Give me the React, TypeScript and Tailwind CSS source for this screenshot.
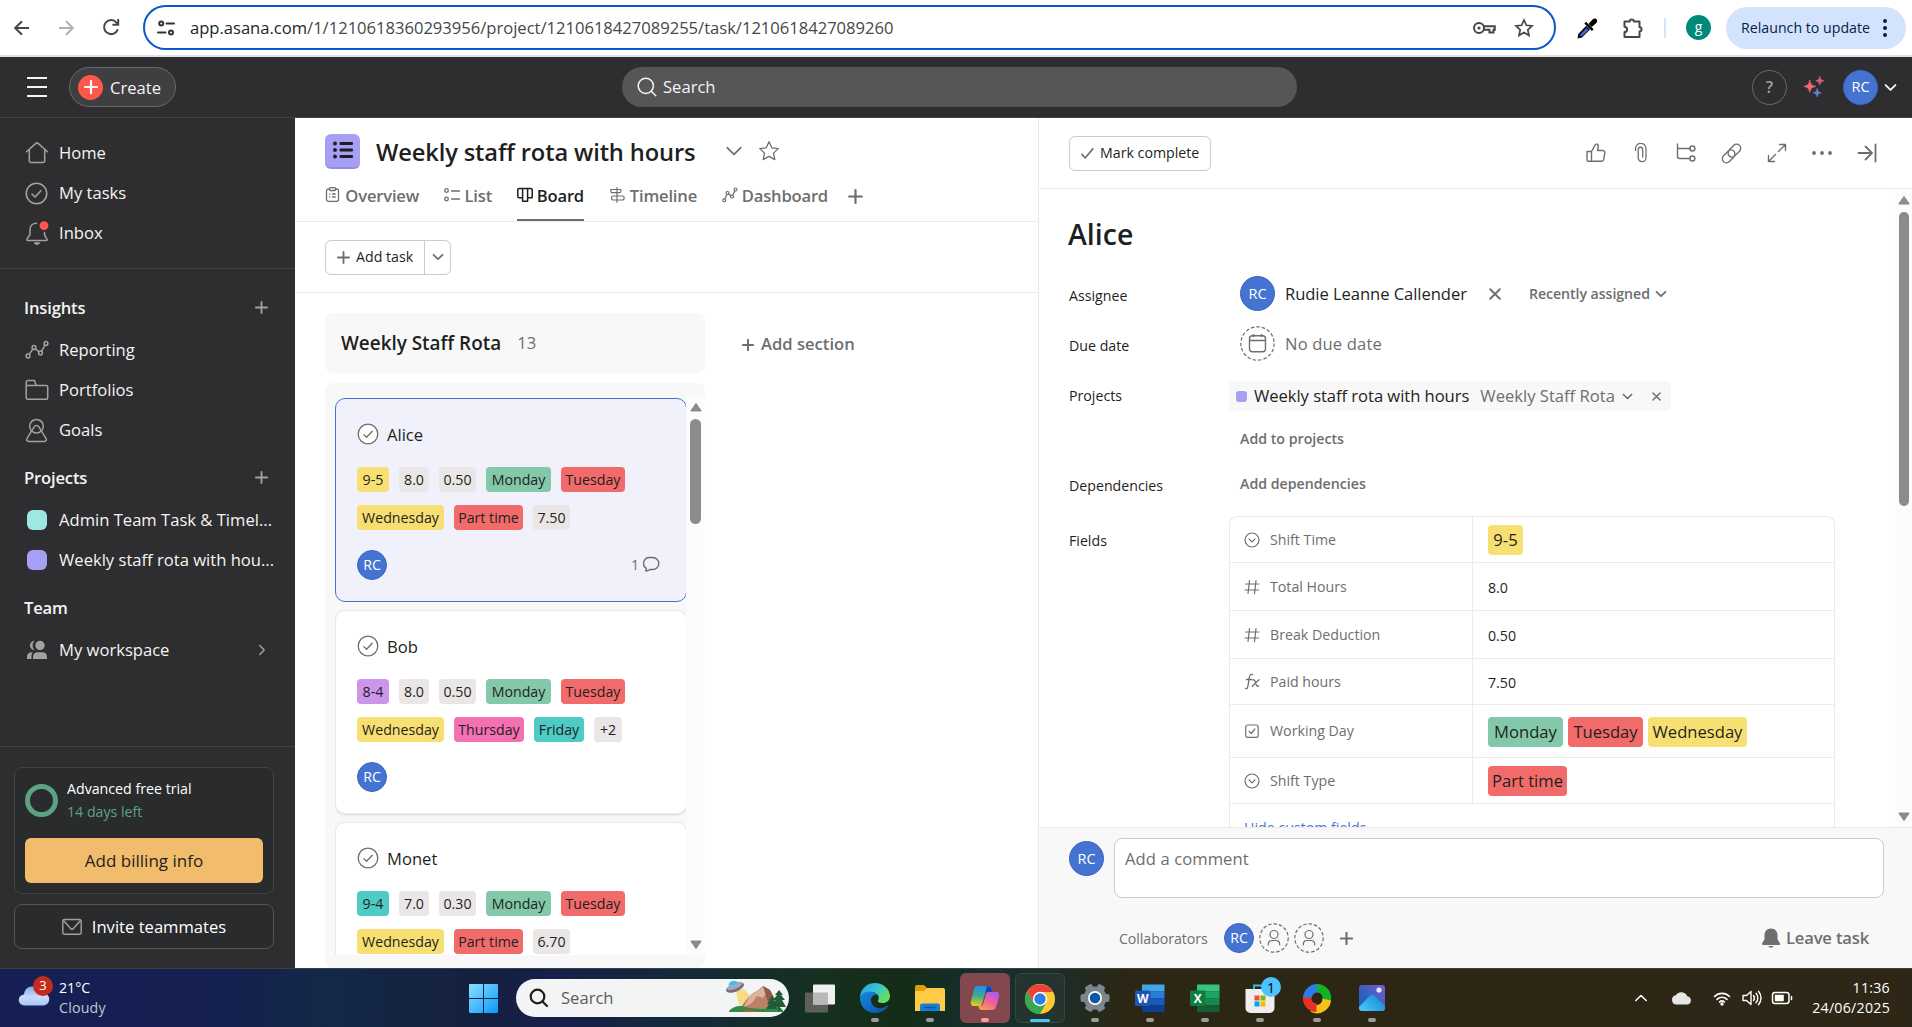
import type { ReactNode } from "react";

type IconProps = { className?: string; children: ReactNode; size?: number; sw?: number; box?: number };

function Icon({ className = "", children, size = 20, sw = 1.4, box = 20 }: IconProps) {
  return (
    <svg
      width={size}
      height={size}
      viewBox={`0 0 ${box} ${box}`}
      fill="none"
      stroke="currentColor"
      strokeWidth={sw}
      strokeLinecap="round"
      strokeLinejoin="round"
      className={`shrink-0 ${className}`}
    >
      {children}
    </svg>
  );
}

const Chevron = ({ size = 12, sw = 1.8, className = "" }: { size?: number; sw?: number; className?: string }) => (
  <Icon size={size} box={12} sw={sw} className={className}>
    <path d="M1.500 3.800 6 8.200l4.500-4.400" />
  </Icon>
);

const Plus = ({ size = 13, sw = 2, className = "" }: { size?: number; sw?: number; className?: string }) => (
  <Icon size={size} box={14} sw={sw} className={className}>
    <path d="M7 1v12M1 7h12" />
  </Icon>
);

const Cross = ({ size = 10, className = "" }: { size?: number; className?: string }) => (
  <Icon size={size} box={10} sw={1.6} className={className}>
    <path d="M1 1l8 8M9 1 1 9" />
  </Icon>
);

const CircleCheck = ({ size = 22, sw = 1.4, className = "" }: { size?: number; sw?: number; className?: string }) => (
  <Icon size={size} box={22} sw={sw} className={className}>
    <circle cx="11" cy="11" r="9.800" />
    <path d="m6.800 11.600 2.800 2.700 5.600-6" />
  </Icon>
);

const GraphIcon = ({ size = 24, sw = 1.5 }: { size?: number; sw?: number }) => (
  <Icon size={size} box={24} sw={sw}>
    <circle cx="3" cy="18" r="1.900" />
    <circle cx="9" cy="9.500" r="1.900" />
    <circle cx="15.500" cy="15" r="1.900" />
    <circle cx="21" cy="5.500" r="1.900" />
    <path d="M4.200 16.400 7.900 11M10.500 10.800l3.600 3M16.500 13.300l3.500-6.200" />
  </Icon>
);

function Avatar({ className = "" }: { className?: string }) {
  return (
    <span
      className={`flex shrink-0 items-center justify-center rounded-full border border-[#3c66bd] bg-[#4573d2] text-white ${className}`}
    >
      RC
    </span>
  );
}

/* ---------- Browser toolbar ---------- */

function BrowserBar() {
  return (
    <div className="flex h-[57px] shrink-0 items-center border-b-2 border-[#dfe1e0] bg-white text-[#474747]">
      <div className="flex w-[143px] shrink-0 items-center">
        <Icon size={18} box={18} sw={2} className="ml-[13px]">
          <path d="M16 9H2.500M9 2.200 2.200 9 9 15.800" strokeLinecap="butt" strokeLinejoin="miter" />
        </Icon>
        <Icon size={18} box={18} sw={2} className="ml-[26px] text-[#b0b0b0]">
          <path d="M2 9h13.500M9 2.200 15.800 9 9 15.800" strokeLinecap="butt" strokeLinejoin="miter" />
        </Icon>
        <Icon size={20} box={20} sw={2} className="-mt-px ml-[26px]">
          <path d="M16.800 12.200A7 7 0 1 1 15.500 5.600L17 7.200" strokeLinecap="butt" />
          <path d="M17.200 2v5.800h-5.800" strokeLinecap="butt" strokeLinejoin="miter" />
        </Icon>
      </div>
      <div className="flex h-[45px] w-[1413px] shrink-0 items-center rounded-full border-2 border-[#0b57d0]">
        <Icon size={18} box={18} sw={2} className="ml-[12px] text-[#333]">
          <circle cx="4.200" cy="4.500" r="2" />
          <path d="M9.500 4.500H17M1 13.500h7.500" />
          <circle cx="14" cy="13.500" r="2" />
        </Icon>
        <span className="ml-[15px] text-[16.6px] leading-6 tracking-[-0.001em] text-[#474747]">
          <span className="text-[#1f1f1f]">app.asana.com</span>/1/1210618360293956/project/1210618427089255/task/1210618427089260
        </span>
        <Icon size={24} box={24} sw={2} className="ml-auto">
          <circle cx="7" cy="12" r="5" />
          <circle cx="7" cy="12" r="1.600" fill="currentColor" stroke="none" />
          <path d="M12 10.200h10.800v3.600h-1.300v2.700h-4v-2.700H12" strokeLinejoin="miter" />
        </Icon>
        <Icon size={20} box={20} sw={1.7} className="mr-[20px] ml-[18px]">
          <path
            d="m10 2 2.400 5.300 5.700.600-4.300 3.900 1.200 5.700L10 14.600l-5 2.900 1.200-5.700L1.900 7.900l5.700-.6z"
            strokeLinejoin="miter"
          />
        </Icon>
      </div>
      <Icon size={22} box={22} sw={0} className="ml-[20px]">
        <path d="M1.500 21.500 2.200 17l8-8.200 3.800 3.800-8 8z" fill="#111" />
        <path d="m4.200 18.700.3-1.500 6-6 1.800 1.800-6 5.800z" fill="#4a67f0" />
        <path d="m10 4.700 7.600 7.600-1.700 1.700-7.600-7.600z" fill="#000" />
        <path d="M12.500 7 16.500 2.500c1.500-1.600 3.800-1.100 4.400.3.500 1.100.2 2.300-.6 3.100L15.800 10z" fill="#000" />
      </Icon>
      <Icon size={22} box={22} sw={2} className="ml-[24px]">
        <path
          d="M2.500 4.500h5.200a2.100 2.100 0 0 1 4.200 0h5.600v5.700a2.100 2.100 0 0 1 0 4.200v5.600h-15v-5a2.600 2.600 0 0 0 0-5.200z"
          strokeLinejoin="round"
        />
      </Icon>
      <span className="ml-[20px] h-5 w-[2px] bg-[#d3e3fd]" />
      <span className="ml-[20px] flex size-[25px] items-center justify-center rounded-full bg-[#00897b] pb-[2px] text-sm text-white">
        g
      </span>
      <span className="ml-[15px] flex h-[42px] w-[180px] items-center rounded-full bg-[#d3e3fd] pl-[15px] text-[14.2px] text-[#041e49]">
        Relaunch to update
        <span className="ml-[13px] flex flex-col gap-[3px]">
          <span className="size-1 rounded-full bg-[#041e49]" />
          <span className="size-1 rounded-full bg-[#041e49]" />
          <span className="size-1 rounded-full bg-[#041e49]" />
        </span>
      </span>
    </div>
  );
}

/* ---------- Asana top bar ---------- */

function TopBar() {
  return (
    <header className="flex h-[61px] shrink-0 items-center border-b border-[#424244] bg-[#2e2e30] text-[16.6px] text-[#f5f4f3]">
      <div className="ml-[27px] flex w-5 flex-col gap-[7px]">
        <span className="h-[2px] bg-[#f5f4f3]" />
        <span className="h-[2px] bg-[#f5f4f3]" />
        <span className="h-[2px] bg-[#f5f4f3]" />
      </div>
      <button className="ml-[22px] flex h-10 w-[107px] items-center rounded-full border border-[#6a696a] bg-[#3f3f41] pl-2">
        <span className="flex size-[25px] items-center justify-center rounded-full bg-[#ff584a] text-white">
          <Plus size={14} sw={2.2} />
        </span>
        <span className="ml-[7px] pt-[2px]">Create</span>
      </button>
      <div className="ml-[446px] flex h-10 w-[675px] items-center rounded-full bg-[#565557] pl-[15px]">
        <Icon size={20} box={20} sw={1.5}>
          <circle cx="8.800" cy="8.800" r="7.600" />
          <path d="m14.500 14.500 4.300 4.300" />
        </Icon>
        <span className="ml-[6px] pt-px">Search</span>
      </div>
      <span className="ml-[455px] flex size-[35px] items-center justify-center rounded-full border border-[#6a696a] text-[16px] font-semibold text-[#a2a0a2]">
        ?
      </span>
      <Icon size={22} box={22} sw={0} className="ml-[16px]">
        <path d="M6.800 4.500c1 4.100 1.800 4.900 5.900 5.900-4.100 1-4.900 1.800-5.900 5.900-1-4.100-1.800-4.900-5.900-5.900 4.100-1 4.900-1.800 5.900-5.900Z" fill="#f06a6a" stroke="#f06a6a" strokeWidth="0.800" />
        <path d="M16.800.800c.7 2.700 1.300 3.300 4 4-2.700.7-3.300 1.300-4 4-.7-2.700-1.300-3.300-4-4 2.700-.7 3.300-1.300 4-4Z" fill="#d9627c" stroke="#d9627c" strokeWidth="0.800" />
        <path d="M14.200 12.800c.7 2.700 1.300 3.300 4 4-2.700.7-3.300 1.300-4 4-.7-2.700-1.300-3.300-4-4 2.700-.7 3.300-1.300 4-4Z" fill="#6c7bd9" stroke="#6c7bd9" strokeWidth="0.800" />
      </Icon>
      <Avatar className="ml-[18px] size-[35px] text-[14.5px]" />
      <Chevron size={13} className="ml-[6px]" />
    </header>
  );
}

/* ---------- Sidebar ---------- */

function NavRow({ icon, label, trailing }: { icon: ReactNode; label: string; trailing?: ReactNode }) {
  return (
    <div className="flex h-10 items-center pr-[27px] pl-6 text-[16.6px] whitespace-nowrap text-[#f5f4f3]">
      <span className="flex w-[25px] shrink-0 justify-center text-[#a2a0a2]">{icon}</span>
      <span className="ml-[10px] pt-px">{label}</span>
      {trailing && <span className="ml-auto text-[#a2a0a2]">{trailing}</span>}
    </div>
  );
}

function NavHeading({ label, plus }: { label: string; plus?: boolean }) {
  return (
    <div className="flex h-[45px] items-center justify-between pr-[27px] pl-6 text-[16.6px] font-semibold tracking-[-0.01em] text-[#f5f4f3]">
      <span className="pt-px">{label}</span>
      {plus && <Plus size={13} className="text-[#a2a0a2]" />}
    </div>
  );
}

function Sidebar() {
  return (
    <aside className="flex w-[295px] shrink-0 flex-col bg-[#2e2e30]">
      <div className="h-[151px] border-b border-[#424244] pt-[15px]">
        <NavRow
          label="Home"
          icon={
            <Icon size={24} box={24} sw={1.5}>
              <path d="M1.500 10.800 10.600 2.600a2 2 0 0 1 2.800 0l9.100 8.200M4.300 9v10.500a2 2 0 0 0 2 2h11.400a2 2 0 0 0 2-2V9" />
            </Icon>
          }
        />
        <NavRow label="My tasks" icon={<CircleCheck size={23} sw={1.5} />} />
        <NavRow
          label="Inbox"
          icon={
            <Icon size={24} box={24} sw={1.5}>
              <path d="M11.500 2.200C7.600 2.200 5 5 5 8.800v4.700L2 18.200c-.3.700 0 1.300.700 1.300h18.600c.7 0 1-.6.7-1.300l-2.500-4.200v-2.600" />
              <path d="M9.800 22h4.400l-2.200 1.300z" fill="currentColor" />
              <circle cx="19" cy="4.700" r="4.400" fill="#ff584a" stroke="none" />
            </Icon>
          }
        />
      </div>
      <div className="pt-[16px]">
        <NavHeading label="Insights" plus />
        <NavRow label="Reporting" icon={<GraphIcon />} />
        <NavRow
          label="Portfolios"
          icon={
            <Icon size={24} box={24} sw={1.5}>
              <path d="M1.200 7.500V4a1.500 1.500 0 0 1 1.500-1.500h6.800L11 7.500M1.200 7.500h20a1.500 1.500 0 0 1 1.500 1.500v10.700a1.500 1.500 0 0 1-1.500 1.500H2.700a1.500 1.500 0 0 1-1.500-1.500z" />
            </Icon>
          }
        />
        <NavRow
          label="Goals"
          icon={
            <Icon size={25} box={25} sw={1.5}>
              <circle cx="12.500" cy="8.200" r="6.800" />
              <path d="M10.300 8.700c1-1.600 3.400-1.600 4.400 0l7.300 11.600c1 1.500 0 3.200-1.800 3.200H4.800C3 23.500 2 21.800 3 20.300z" />
            </Icon>
          }
        />
      </div>
      <div className="pt-[5px]">
        <NavHeading label="Projects" plus />
        <NavRow label="Admin Team Task & Timel..." icon={<span className="size-5 rounded-md bg-[#9ee7e3]" />} />
        <NavRow label="Weekly staff rota with hou..." icon={<span className="size-5 rounded-md bg-[#a69ff3]" />} />
      </div>
      <div className="pt-[5px]">
        <NavHeading label="Team" />
        <NavRow
          label="My workspace"
          icon={
            <Icon size={22} box={22} sw={0}>
              <g fill="currentColor">
                <circle cx="14" cy="6.500" r="4.700" />
                <path d="M7 20v-2.500c0-2.700 2-4.300 4.300-4.300h5.400c2.400 0 4.300 1.700 4.300 4.300V20z" />
                <path d="M8.600 1.800A6.500 6.500 0 0 0 8.600 11.200 4.700 4.700 0 0 1 8.600 1.800Z" />
                <path d="M1 20v-2.500c0-2.400 1.800-4.300 5-4.300h.9c-1 1-1.400 2.300-1.400 4V20z" />
              </g>
            </Icon>
          }
          trailing={<Chevron size={12} sw={1.5} className="-rotate-90" />}
        />
      </div>
      <div className="mt-auto border-t border-[#424244] px-[14px] pt-[20px] pb-[19px]">
        <div className="h-[127px] w-[260px] rounded-lg border border-[#424244] bg-[#2a2b2d] px-[10px] pt-[9px]">
          <div className="flex h-[46px] items-center">
            <span className="size-[33px] rounded-full border-[5px] border-[#5da283]" />
            <div className="ml-[9px] text-[14.2px] leading-[23px] text-white">
              <div>Advanced free trial</div>
              <div className="text-[#5da283]">14 days left</div>
            </div>
          </div>
          <button className="mt-[15px] h-[45px] w-[238px] rounded-md bg-[#f1bd6c] pt-px text-[17px] text-[#1e1f21]">Add billing info</button>
        </div>
        <button className="mt-[10px] flex h-[45px] w-[260px] items-center justify-center rounded-lg border border-[#565557] bg-[#2a2b2d] text-[16.6px] text-white">
          <Icon size={20} box={20} sw={1.4} className="mr-[10px] text-[#a2a0a2]">
            <rect x="0.800" y="2.500" width="18.400" height="14.800" rx="2" />
            <path d="m1.500 3.500 7.300 8.200c.7.700 1.700.700 2.400 0l7.300-8.200" />
          </Icon>
          <span className="pt-[2px]">Invite teammates</span>
        </button>
      </div>
    </aside>
  );
}

/* ---------- Board ---------- */

const CHIP = {
  yellow: "bg-[#f8df72]",
  gray: "bg-[#e9e6e5]",
  green: "bg-[#83c9a9]",
  red: "bg-[#f16b6b]",
  pink: "bg-[#f56fb3]",
  teal: "bg-[#4ecbc4]",
  purple: "bg-[#cd95ea]",
};
type Chip = [label: string, color: keyof typeof CHIP, width: string];

const MON: Chip = ["Monday", "green", "w-[65px]"];
const TUE: Chip = ["Tuesday", "red", "w-[64px]"];
const WED: Chip = ["Wednesday", "yellow", "w-[87px]"];
const PART: Chip = ["Part time", "red", "w-[69px]"];

type CardData = { name: string; rows: Chip[][]; comments?: number; selected?: boolean };

const CARDS: CardData[] = [
  {
    name: "Alice",
    selected: true,
    comments: 1,
    rows: [
      [["9-5", "yellow", "w-8"], ["8.0", "gray", "w-[30px]"], ["0.50", "gray", "w-[37px]"], MON, TUE],
      [WED, PART, ["7.50", "gray", "w-[37px]"]],
    ],
  },
  {
    name: "Bob",
    rows: [
      [["8-4", "purple", "w-8"], ["8.0", "gray", "w-[30px]"], ["0.50", "gray", "w-[37px]"], MON, TUE],
      [WED, ["Thursday", "pink", "w-[70px]"], ["Friday", "teal", "w-[50px]"], ["+2", "gray", "w-[28px]"]],
    ],
  },
  {
    name: "Monet",
    rows: [
      [["9-4", "teal", "w-8"], ["7.0", "gray", "w-[30px]"], ["0.30", "gray", "w-[37px]"], MON, TUE],
      [WED, PART, ["6.70", "gray", "w-[37px]"]],
    ],
  },
];

function TaskCard({ card }: { card: CardData }) {
  return (
    <div
      className={`h-[204px] w-[352px] shrink-0 rounded-[10px] border pt-[22px] pl-[21px] ${
        card.selected ? "border-[#4573d2] bg-[#f1f1fc]" : "border-[#edeae9] bg-white shadow-sm"
      }`}
    >
      <div className="flex h-[26px] items-center text-[16.6px] text-[#1e1f21]">
        <CircleCheck size={22} sw={1.3} className="text-[#6d6e6f] [&_circle]:fill-white" />
        <span className="ml-[8px] pt-[3px]">{card.name}</span>
      </div>
      {card.rows.map((row, i) => (
        <div key={i} className={`flex gap-[10px] ${i === 0 ? "mt-5" : "mt-[13px]"}`}>
          {row.map(([label, color, width]) => (
            <span
              key={label}
              className={`flex h-[25px] items-center justify-center rounded text-[14.2px] whitespace-nowrap text-[#1e1f21] ${CHIP[color]} ${width}`}
            >
              {label}
            </span>
          ))}
        </div>
      ))}
      <div className="mt-5 flex items-center pr-[26px]">
        <Avatar className="size-[30px] text-[14.2px]" />
        {card.comments && (
          <span className="ml-auto flex items-center gap-1 text-[14.2px] text-[#6d6e6f]">
            {card.comments}
            <Icon size={17} box={17} sw={1.4}>
              <path d="M7.300 1.500h2.500a6 6 0 0 1 0 12H7c-1 .900-2.600 1.500-4.300 1.500.5-.8.700-1.700.5-2.600A6 6 0 0 1 7.300 1.500Z" />
            </Icon>
          </span>
        )}
      </div>
    </div>
  );
}

function Tab({ icon, label, active, width }: { icon: ReactNode; label: string; active?: boolean; width: string }) {
  return (
    <span
      className={`flex h-full justify-between border-b-2 text-[16.6px] leading-5 font-semibold tracking-[-0.012em] whitespace-nowrap ${
        active ? "border-[#6d6e6f] text-[#1e1f21]" : "border-transparent text-[#6d6e6f]"
      } ${width}`}
    >
      {icon}
      <span className="pt-[2px]">{label}</span>
    </span>
  );
}

function ScrollArrow({ down }: { down?: boolean }) {
  return (
    <svg width="12" height="10" viewBox="0 0 12 10" className={down ? "rotate-180" : ""}>
      <path d="M6 0.800 11.300 8.300Q11.600 9.500 10.500 9.500H1.500Q.4 9.500.7 8.300Z" fill="#8b8b8b" />
    </svg>
  );
}

function Board() {
  return (
    <main className="flex w-[743px] shrink-0 flex-col bg-white">
      <div className="flex h-[66px] items-center pl-[30px]">
        <span className="flex size-[35px] items-center justify-center rounded-md border-b-2 border-[#958ee0] bg-[#a69ff3] text-[#1e1f21]">
          <Icon size={20} box={20} sw={0}>
            <g fill="currentColor">
              <circle cx="2" cy="3.500" r="2" />
              <circle cx="2" cy="10" r="2" />
              <circle cx="2" cy="16.500" r="2" />
              <rect x="6.500" y="2" width="13.500" height="3" rx="1" />
              <rect x="6.500" y="8.500" width="13.500" height="3" rx="1" />
              <rect x="6.500" y="15" width="13.500" height="3" rx="1" />
            </g>
          </Icon>
        </span>
        <h1 className="ml-4 pt-[3px] text-[23.7px] font-semibold tracking-[-0.006em] whitespace-nowrap text-[#1e1f21]">
          Weekly staff rota with hours
        </h1>
        <Chevron size={18} sw={1.1} className="ml-[30px] text-[#6d6e6f]" />
        <Icon size={22} box={22} sw={1.3} className="ml-[15px] text-[#6d6e6f]">
          <path d="m11 1.800 2.800 6 6.500.800-4.800 4.500 1.300 6.500L11 16.400l-5.800 3.200 1.300-6.500L1.700 8.600l6.500-.8z" />
        </Icon>
      </div>
      <div className="flex h-[38px] border-b border-[#edeae9] pl-[30px]">
        <div className="flex h-[37px] gap-[25px]">
          <Tab
            label="Overview"
            width="w-[94px]"
            icon={
              <Icon size={15} box={15} sw={1.3} className="mt-[3px]">
                <rect x="1.500" y="2" width="12" height="12.300" rx="2" />
                <rect x="4.500" y="0.700" width="6" height="2.800" rx="1" fill="white" />
                <path d="M4.800 7h.1M7.500 7h2.700M4.800 10h.1M7.500 10h2.700" />
              </Icon>
            }
          />
          <Tab
            label="List"
            width="w-[48px]"
            icon={
              <Icon size={16} box={16} sw={1.3} className="mt-[3px]">
                <circle cx="2.500" cy="3.500" r="1.800" />
                <circle cx="2.500" cy="12" r="1.800" />
                <path d="M7.500 4h8M7.500 12h8" />
              </Icon>
            }
          />
          <Tab
            label="Board"
            active
            width="w-[67px]"
            icon={
              <Icon size={16} box={16} sw={1.5} className="mt-[3px]">
                <path d="M2 1.500h12a1.200 1.200 0 0 1 1.200 1.200v8H10.600v3.500H5.600v-3.500H2A1.200 1.200 0 0 1 .8 9.500V2.700A1.200 1.200 0 0 1 2 1.500ZM5.600 1.500v9M10.600 1.500v9" />
              </Icon>
            }
          />
          <Tab
            label="Timeline"
            width="w-[88px]"
            icon={
              <Icon size={16} box={16} sw={1.2} className="mt-[3px]">
                <path d="M8 .7v14.600M8 2.500H1.800v1.700A1.500 1.500 0 0 0 3.300 5.700H8M8 2.500h3.800v1.700a1.500 1.500 0 0 1-1.500 1.500H8M8 9H4.200a1.600 1.600 0 0 0-1.600 1.600v.8A1.600 1.600 0 0 0 4.200 13H8M8 9h5.500a1.600 1.600 0 0 1 1.600 1.600v.8a1.600 1.600 0 0 1-1.600 1.600H8" />
              </Icon>
            }
          />
          <Tab
            label="Dashboard"
            width="w-[106px]"
            icon={
              <Icon size={16} box={16} sw={1.2} className="mt-[3px]">
                <circle cx="2.300" cy="13.300" r="1.500" />
                <circle cx="5.500" cy="6" r="1.500" />
                <circle cx="10" cy="9.500" r="1.500" />
                <circle cx="13.500" cy="2.500" r="1.500" />
                <path d="m2.900 11.800 2-4.300M6.700 7l2.100 1.600M10.700 8.100l2.200-4.200" />
              </Icon>
            }
          />
          <Plus size={15} sw={2} className="-ml-[5px] mt-[5px] text-[#6d6e6f]" />
        </div>
      </div>
      <div className="flex h-[71px] items-center border-b border-[#edeae9] pl-[30px]">
        <div className="flex h-[35px] w-[126px] items-center rounded-md border border-[#cfcbcb] text-[14.2px] text-[#1e1f21]">
          <Plus size={13} className="ml-[11px] text-[#6d6e6f]" />
          <span className="ml-[6px]">Add task</span>
          <span className="ml-auto flex h-full w-[26px] items-center justify-center border-l border-[#cfcbcb]">
            <Chevron size={12} className="text-[#6d6e6f]" />
          </span>
        </div>
      </div>
      <div className="flex min-h-0 flex-1 pt-5 pl-[30px]">
        <div className="flex w-[380px] shrink-0 flex-col">
          <div className="flex h-[60px] shrink-0 items-center rounded-lg bg-[#f8f8f8] pl-4">
            <span className="text-[18.900px] font-semibold text-[#1e1f21]">Weekly Staff Rota</span>
            <span className="ml-4 pt-px text-[16.6px] text-[#6d6e6f]">13</span>
          </div>
          <div className="mt-[10px] flex min-h-0 flex-1 rounded-lg bg-[#f8f8f8] pt-[13px] pb-[13px] pl-[10px]">
            <div className="flex w-[351px] flex-col gap-2 overflow-hidden pt-[2px]">
              {CARDS.map((card) => (
                <TaskCard key={card.name} card={card} />
              ))}
            </div>
            <div className="flex w-[19px] flex-col items-center bg-[#fcfcfc] pt-[6px]">
              <ScrollArrow />
              <div className="mt-[7px] h-[105px] w-[11px] rounded-full bg-[#8b8b8b]" />
              <div className="mt-auto pb-[5px]">
                <ScrollArrow down />
              </div>
            </div>
          </div>
        </div>
        <div className="ml-[37px] flex h-[63px] items-center text-[16.6px] font-semibold text-[#6d6e6f]">
          <Plus size={12} sw={2.300} />
          <span className="ml-[7px]">Add section</span>
        </div>
      </div>
    </main>
  );
}

/* ---------- Task detail ---------- */

const DropIcon = () => (
  <Icon size={16} box={16} sw={1.2}>
    <circle cx="8" cy="8" r="7" />
    <path d="m5 6.800 3 3 3-3" />
  </Icon>
);
const HashIcon = () => (
  <Icon size={16} box={16} sw={1.2}>
    <path d="M1.500 5h13.500M1 11h13.500M5.500 1.500 4 14.500M12 1.500l-1.500 13" />
  </Icon>
);
const FxIcon = () => (
  <Icon size={17} box={17} sw={1.3}>
    <path d="M8.500 1.700C6.800 1 5.800 1.800 5.500 3.500L3.900 13.200c-.3 1.800-1 2.700-2.400 2.300M2.500 6.500h5M8.700 7c1.500-.7 2 0 2.500 1.500l1.200 3.500c.4 1.300 1.200 1.500 2.300 1M15 6.700l-6.800 6.600" />
  </Icon>
);
const CheckBoxIcon = () => (
  <Icon size={16} box={16} sw={1.2}>
    <rect x="1.700" y="2" width="12.500" height="12.300" rx="2" />
    <path d="m5 8.300 2.200 2.200 3.700-4.500" />
  </Icon>
);

type FieldRow = { icon: ReactNode; label: string; height: string; value?: string; chips?: Chip[] };

const FIELDS: FieldRow[] = [
  { icon: <DropIcon />, label: "Shift Time", height: "h-[46px]", chips: [["9-5", "yellow", "w-[35px]"]] },
  { icon: <HashIcon />, label: "Total Hours", height: "h-12", value: "8.0" },
  { icon: <HashIcon />, label: "Break Deduction", height: "h-12", value: "0.50" },
  { icon: <FxIcon />, label: "Paid hours", height: "h-[46px]", value: "7.50" },
  {
    icon: <CheckBoxIcon />,
    label: "Working Day",
    height: "h-[53px]",
    chips: [
      ["Monday", "green", "w-[75px]"],
      ["Tuesday", "red", "w-[75px]"],
      ["Wednesday", "yellow", "w-[99px]"],
    ],
  },
  { icon: <DropIcon />, label: "Shift Type", height: "h-[46px]", chips: [["Part time", "red", "w-[79px]"]] },
];

function FieldsTable() {
  return (
    <div className="w-[606px] rounded-t-lg border border-b-0 border-[#edeae9]">
      {FIELDS.map((f) => (
        <div key={f.label} className={`flex border-b border-[#edeae9] ${f.height}`}>
          <div className="flex w-[243px] items-center border-r border-[#edeae9] pl-[14px] text-[14.2px] text-[#6d6e6f]">
            <span className="w-[26px]">{f.icon}</span>
            {f.label}
          </div>
          <div className="flex items-center gap-[5px] pl-[15px] text-[14.2px] text-[#1e1f21]">
            {f.value && <span className="pt-[2px]">{f.value}</span>}
            {f.chips?.map(([label, color, width]) => (
              <span
                key={label}
                className={`mt-px flex h-[30px] items-center justify-center rounded pt-px text-[16.6px] ${CHIP[color]} ${width}`}
              >
                {label}
              </span>
            ))}
          </div>
        </div>
      ))}
      <div className="pt-[14px] pl-[14px] text-[14.2px] leading-[20px] text-[#4573d2]">Hide custom fields</div>
    </div>
  );
}

function DetailRow({ label, height, labelPad = "pt-[2px]", children }: { label: string; height: string; labelPad?: string; children: ReactNode }) {
  return (
    <div className={`flex ${height}`}>
      <div className={`w-[171px] shrink-0 text-[14.2px] leading-[35px] text-[#1e1f21] ${labelPad}`}>{label}</div>
      {children}
    </div>
  );
}

function DashedCircle({ size, children }: { size: number; children: ReactNode }) {
  return (
    <svg width={size} height={size} viewBox={`0 0 ${size} ${size}`} fill="none" stroke="#6d6e6f" strokeWidth="1.200" className="shrink-0">
      <circle cx={size / 2} cy={size / 2} r={size / 2 - 0.8} strokeDasharray="3.500 2" />
      {children}
    </svg>
  );
}

const PersonCircle = () => (
  <DashedCircle size={30}>
    <circle cx="15" cy="11.500" r="4" />
    <path d="M9.300 22v-1a3.500 3.500 0 0 1 3.500-3.500h4.400a3.500 3.500 0 0 1 3.500 3.500v1" strokeLinecap="round" />
  </DashedCircle>
);

function TaskToolbar() {
  return (
    <div className="flex h-[71px] shrink-0 items-center border-b border-[#edeae9] pl-[30px] text-[#6d6e6f]">
      <button className="flex h-[35px] w-[142px] items-center rounded-md border border-[#cfcbcb] pl-[11px] text-[14.2px] whitespace-nowrap text-[#1e1f21]">
        <Icon size={13} box={14} sw={1.8} className="mr-[6px] text-[#6d6e6f]">
          <path d="m1 8 3.500 3.800L12.700 2" />
        </Icon>
        Mark complete
      </button>
      <div className="ml-auto flex items-center gap-[25px] pr-[35px]">
        <Icon sw={1.4}>
          <path d="M1 8.500h4.500l3.300-5.800C9.100 1.300 10 .9 11 1.200c1.100.400 1.500 1.500 1.200 2.700l-.7 3.600h5.300c1.300 0 2.200 1 2 2.300l-1 6.200c-.2 1.300-1.200 2.300-2.500 2.300H2a1 1 0 0 1-1-1zM5.500 8.500v9.500" />
        </Icon>
        <Icon sw={1.3}>
          <path d="M4.500 7.500V5.600a5 5 0 0 1 10.500 0v9.200a3.900 3.900 0 0 1-7.800 0V6.500a2 2 0 0 1 4.500 0v7.500" />
        </Icon>
        <Icon sw={1.4}>
          <path d="M1.500 1v12.500a2 2 0 0 0 2 2H14M1.500 5.500H14" />
          <circle cx="16.400" cy="5.500" r="2.500" />
          <circle cx="16.400" cy="15.500" r="2.500" />
        </Icon>
        <Icon sw={1.3} size={21}>
          <path d="m8 6.500 4-4.200a3.700 3.700 0 0 1 5.600 5.500l-4.600 4.600a3.700 3.700 0 0 1-5.400-.2 3.500 3.500 0 0 1-.4-4" />
          <path d="m12 13.500-4 4.200a3.700 3.700 0 0 1-5.600-5.500L7 7.600a3.700 3.700 0 0 1 5.400.2 3.500 3.500 0 0 1 .4 4" />
        </Icon>
        <Icon sw={1.4}>
          <path d="M12.500 1.500h6v6M18.500 1.500l-7 7M7.500 18.500h-6v-6M1.500 18.500l7-7" />
        </Icon>
        <Icon sw={0}>
          <g fill="currentColor">
            <circle cx="2" cy="10" r="1.900" />
            <circle cx="10" cy="10" r="1.900" />
            <circle cx="18" cy="10" r="1.900" />
          </g>
        </Icon>
        <Icon sw={1.8}>
          <path d="M1.500 10h13M8.500 3.500l6.500 6.500-6.500 6.500M18.500 1.500v17" />
        </Icon>
      </div>
    </div>
  );
}

function TaskDetail() {
  return (
    <section className="flex min-w-0 flex-1 flex-col border-l border-[#edeae9] bg-white">
      <TaskToolbar />
      <div className="flex min-h-0 flex-1">
        <div className="min-w-0 flex-1 overflow-hidden pt-[25px] pl-[30px]">
          <h2 className="-ml-px h-[62px] text-[28.5px] leading-10 font-semibold text-[#1e1f21]">Alice</h2>
          <DetailRow label="Assignee" height="h-[50px]">
            <div className="flex h-[35px] items-center text-[16.6px] whitespace-nowrap text-[#1e1f21]">
              <Avatar className="size-[35px] text-[14.5px]" />
              <span className="ml-[10px] pt-[2px] tracking-[-0.004em]">Rudie Leanne Callender</span>
              <Cross size={12} className="ml-[22px] text-[#6d6e6f]" />
              <span className="ml-[28px] text-[14.2px] font-semibold tracking-[-0.005em] text-[#6d6e6f]">Recently assigned</span>
              <Chevron size={12} className="ml-[5px] text-[#6d6e6f]" />
            </div>
          </DetailRow>
          <DetailRow label="Due date" height="h-[50px]">
            <div className="flex h-[35px] items-center text-[16.6px] text-[#6d6e6f]">
              <DashedCircle size={35}>
                <rect x="9.500" y="9.800" width="16" height="16" rx="3" strokeWidth="1.400" />
                <path d="M9.500 14.500h16M13.500 8v3M21.500 8v3" strokeWidth="1.400" />
              </DashedCircle>
              <span className="ml-[10px] pt-[2px] tracking-[0.009em]">No due date</span>
            </div>
          </DetailRow>
          <DetailRow label="Projects" height="h-[90px]">
            <div className="-ml-[11px] pt-[5px]">
              <div className="flex h-[30px] w-[442px] items-center rounded bg-[#f8f8f8] pl-[7px] text-[16.6px] whitespace-nowrap text-[#1e1f21]">
                <span className="size-[11px] rounded-[3px] bg-[#a69ff3]" />
                <span className="ml-[7px] pt-px tracking-[-0.003em]">Weekly staff rota with hours</span>
                <span className="ml-[11px] pt-px text-[#6d6e6f]">Weekly Staff Rota</span>
                <Chevron size={11} className="ml-[7px] text-[#6d6e6f]" />
                <Cross size={9} className="ml-[19px] text-[#6d6e6f]" />
              </div>
              <div className="mt-4 pl-[11px] text-[14.2px] leading-6 font-semibold text-[#6d6e6f]">Add to projects</div>
            </div>
          </DetailRow>
          <DetailRow label="Dependencies" height="h-[50px]">
            <div className="text-[14.2px] leading-[35px] font-semibold text-[#6d6e6f]">Add dependencies</div>
          </DetailRow>
          <DetailRow label="Fields" height="h-[400px]" labelPad="pt-[7px]">
            <div className="-ml-[11px]">
              <FieldsTable />
            </div>
          </DetailRow>
        </div>
        <div className="flex w-[17px] shrink-0 flex-col items-center bg-[#fcfcfc] pt-[6px]">
          <ScrollArrow />
          <div className="mt-[7px] h-[294px] w-[10px] rounded-full bg-[#8b8b8b]" />
          <div className="mt-auto pb-[5px]">
            <ScrollArrow down />
          </div>
        </div>
      </div>
      <div className="h-[141px] shrink-0 border-t border-[#edeae9] bg-[#f8f8f8] pt-[10px] pl-[30px]">
        <div className="flex">
          <Avatar className="mt-[3px] size-[35px] text-[14.5px]" />
          <div className="ml-[10px] h-[60px] w-[770px] rounded-lg border border-[#cfcbcb] bg-white px-[10px] pt-[7px] text-[16.6px] leading-[25px] tracking-[0.005em] text-[#6d6e6f]">
            Add a comment
          </div>
        </div>
        <div className="mt-[25px] flex h-[30px] items-center pl-[50px] text-[14.2px] text-[#6d6e6f]">
          <span className="w-[90px] pt-px tracking-[-0.005em]">Collaborators</span>
          <Avatar className="ml-[15px] size-[30px] text-[14.2px]" />
          <span className="ml-[5px] flex gap-[5px]">
            <PersonCircle />
            <PersonCircle />
          </span>
          <Plus size={13} sw={2.300} className="ml-4" />
          <Icon size={20} box={20} sw={0} className="ml-auto">
            <path
              d="M10 .5c3.900 0 6.500 2.900 6.500 6.500v4.300l2.500 4.200c.4.700 0 1.500-.800 1.500H1.800c-.8 0-1.200-.8-.8-1.500l2.500-4.200V7C3.500 3.400 6.100.5 10 .5ZM7.500 18h5c-.3 1-1.300 1.700-2.500 1.700S7.800 19 7.500 18Z"
              fill="currentColor"
            />
          </Icon>
          <span className="mr-[43px] ml-[5px] pt-px text-[16.6px] font-semibold tracking-[-0.01em]">Leave task</span>
        </div>
      </div>
    </section>
  );
}

/* ---------- Windows taskbar ---------- */

function TaskbarApp({ children, dot = "gray", className = "" }: { children: ReactNode; dot?: "gray" | "pink" | "blue" | "none"; className?: string }) {
  const dots = {
    gray: "w-2 bg-[#9c9c98]",
    pink: "w-2 bg-[#ff99a4]",
    blue: "w-5 bg-[#4cc2ff]",
    none: "w-0",
  };
  return (
    <div className={`flex h-[50px] w-[50px] flex-col items-center rounded-md pt-[9px] ${className}`}>
      <div className="h-8">{children}</div>
      <span className={`mt-1 h-1 rounded-full ${dots[dot]}`} />
    </div>
  );
}

const Svg = ({ children, size = 32 }: { children: ReactNode; size?: number }) => (
  <svg width={size} height={size} viewBox="0 0 32 32">
    {children}
  </svg>
);

function OfficeIcon({ letter, dark, shades }: { letter: string; dark: string; shades: string[] }) {
  return (
    <svg width="32" height="32" viewBox="0 0 32 32">
      {shades.map((s, i) => (
        <rect key={s} x="8" y={2.5 + i * 6.9} width="22.500" height="7" fill={s} />
      ))}
      <rect x="1" y="8.500" width="15.500" height="15.500" rx="1.500" fill={dark} />
      <text x="8.700" y="20.500" fontSize="12" fontWeight="700" textAnchor="middle" fill="white">
        {letter}
      </text>
    </svg>
  );
}

function SearchArt() {
  return (
    <svg width="60" height="34" viewBox="0 0 60 34">
      <path d="m10 10 3 15 12-9-7-8z" fill="#f6dc84" />
      <path d="M12 29c5-6 9-12 15-17l4-2 6-5 7 4 12 22z" fill="#b98268" />
      <path d="m24 15 7-5 6-4 4 5-4 6-6-2-5 7-9 5z" fill="#dcb29c" />
      <path d="m37 5 7 4 10 20-10-3-3-8z" fill="#8d5d4c" />
      <path d="M3 30c5-6 13-6 20-3l12 1 20-1 3 4H3z" fill="#2e8b46" />
      <path d="M15 30.500c6-3 12-2 18 .5z" fill="#c9562e" />
      <g fill="#1f5c3a">
        <path d="m53 9-4 5h2l-4 5h3l-5 7h7v4h2v-4h6l-4-7h3l-4-5h2z" />
        <path d="m46 15-3 4h1l-3 4h2l-3 5h11l-3-5h2l-3-4h2z" />
      </g>
      <ellipse cx="9" cy="6.500" rx="9.500" ry="4.300" transform="rotate(-22 9 6.500)" fill="#6f6d82" />
      <ellipse cx="8.500" cy="5.200" rx="8" ry="2.800" transform="rotate(-22 8.500 5.200)" fill="#a9a7ba" />
      <path d="M2.500 4c1-5 7.500-5.500 9-2.500-2 2.600-6 3.800-9 2.500Z" fill="#3fc0f0" />
    </svg>
  );
}

function Taskbar() {
  return (
    <footer className="flex h-[59px] shrink-0 items-center border-t border-[#3c4044] bg-linear-[90deg,#171f55_0%,#14204f_12%,#132847_17%,#15203f_25%,#171f4b_29%,#132a38_36%,#16301f_43%,#142c17_47%,#142f2c_51%,#17302d_54%,#2c2614_59%,#2e2616_100%] text-[14.2px] text-white">
      <div className="flex w-[469px] items-center pl-[18px]">
        <div className="relative">
          <svg width="32" height="32" viewBox="0 0 32 32">
            <defs>
              <linearGradient id="cloud" x1="0" y1="0" x2="0" y2="1">
                <stop offset="0" stopColor="#7aa7ef" />
                <stop offset="0.550" stopColor="#c9dcfb" />
                <stop offset="1" stopColor="#a9c6f6" />
              </linearGradient>
            </defs>
            <path d="M6.500 23.500a5.500 5.500 0 0 1-.5-11C6.500 7.500 9.500 4.500 14 4.500c4 0 7 2.500 8 6.500h3a6.200 6.200 0 0 1 0 12.500z" fill="url(#cloud)" />
          </svg>
          <span className="absolute -top-[6px] left-[15px] flex size-5 items-center justify-center rounded-full bg-[#c42b1c] text-[13px]">3</span>
        </div>
        <div className="-mt-px ml-[9px] leading-5">
          <div>21°C</div>
          <div className="tracking-[0.015em] text-[#c3c6d3]">Cloudy</div>
        </div>
      </div>
      <svg width="29" height="29" viewBox="0 0 29 29">
        <defs>
          <linearGradient id="win" x1="0" y1="0" x2="1" y2="1">
            <stop offset="0" stopColor="#8be0ff" />
            <stop offset="1" stopColor="#0a97fb" />
          </linearGradient>
        </defs>
        <path d="M1 0h13v14H0V1a1 1 0 0 1 1-1ZM15 0h13a1 1 0 0 1 1 1v13H15ZM0 15h14v14H1a1 1 0 0 1-1-1ZM15 15h14v13a1 1 0 0 1-1 1H15Z" fill="url(#win)" />
      </svg>
      <div className="ml-[18px] flex h-[38px] w-[273px] items-center rounded-full bg-[#f3f4f4] pl-[13px] text-[16.6px] text-[#5c5c5c]">
        <Icon size={20} box={20} sw={2.2} className="text-[#1f1f1f]">
          <circle cx="8.500" cy="8.500" r="6.800" />
          <path d="m13.500 13.500 4.500 4.500" />
        </Icon>
        <span className="ml-[12px] pt-px">Search</span>
        <span className="mr-[3px] ml-auto">
          <SearchArt />
        </span>
      </div>
      <div className="ml-[6px] flex gap-[5px]">
        <TaskbarApp dot="none">
          <Svg>
            <rect x="1" y="10.500" width="23" height="20" rx="1" fill="#5c5f5c" />
            <rect x="9" y="2.500" width="22" height="20" rx="1" fill="#f0f0f0" />
            <rect x="9" y="10.500" width="15" height="12" fill="#b8b8b8" />
          </Svg>
        </TaskbarApp>
        <TaskbarApp>
          <Svg>
            <defs>
              <linearGradient id="edgeTop" x1="0" y1="0" x2="1" y2="0.600">
                <stop offset="0" stopColor="#2a9be0" />
                <stop offset="0.500" stopColor="#35c1d8" />
                <stop offset="1" stopColor="#66e05a" />
              </linearGradient>
              <linearGradient id="edgeLow" x1="0" y1="0" x2="1" y2="1">
                <stop offset="0" stopColor="#1689de" />
                <stop offset="1" stopColor="#0c4fa8" />
              </linearGradient>
            </defs>
            <path d="M1 16C1 7 8 1 16 1s15 6 15 13c0 4.500-3.500 7-7.500 7-3 0-4.700-1-4.700-2 0-.8 1-1.200 1-3.300C19.800 12.500 16.500 10 12 10 6 10 2 13 1 16Z" fill="url(#edgeTop)" />
            <path d="M1 16c.6-3.500 4.500-6.500 9.500-6.500 4 0 6.500 1.500 8 3.500-4-.8-6.500 2-6.500 5.500 0 5 5 8.500 10.500 7.500 2.500-.4 4.500-1.500 5.800-2.500.6-.3 1 .1.700.7C26.500 28.500 21.500 31 16 31 7.500 31 1 24.500 1 16Z" fill="url(#edgeLow)" />
          </Svg>
        </TaskbarApp>
        <TaskbarApp>
          <Svg>
            <path d="M1 5a2 2 0 0 1 2-2h7l3 3v5H1z" fill="#e39b0c" />
            <path d="M1 9h9l3-3h16a2 2 0 0 1 2 2v21H1z" fill="#fdcb45" />
            <path d="M6 29v-5a2.500 2.500 0 0 1 2.500-2.500h15A2.500 2.500 0 0 1 26 24v5z" fill="#1380d4" />
            <path d="M10 25.500h12" stroke="#0b5394" strokeWidth="1.500" />
          </Svg>
        </TaskbarApp>
        <TaskbarApp dot="pink" className="bg-[#83484d]">
          <Svg>
            <defs>
              <linearGradient id="copA" x1="0.300" y1="0" x2="0.200" y2="1">
                <stop offset="0" stopColor="#1f8fe8" />
                <stop offset="0.500" stopColor="#3cae86" />
                <stop offset="1" stopColor="#f2c91c" />
              </linearGradient>
              <linearGradient id="copB" x1="0.800" y1="0" x2="0.200" y2="1">
                <stop offset="0" stopColor="#a85cf0" />
                <stop offset="0.500" stopColor="#f0609a" />
                <stop offset="1" stopColor="#ff9d4a" />
              </linearGradient>
            </defs>
            <path d="M9 4h10c2 0 3 1 3.500 3l.8 3H19c-2 0-3 1-3.500 3L13 22c-.5 1.500-1.500 2-3 2H5c-3 0-3.500-2-3-5L5 7c.6-2 2-3 4-3Z" fill="url(#copA)" />
            <path d="M18 4c3 0 4 1 4.500 3l.8 3H19c-1.500 0-2.500.7-3 2z" fill="#1b3fc4" />
            <path d="M23 28H13c-2 0-3-1-3.500-3l-.3-1H11c2 0 3-1 3.500-3L17 12.500c.5-1.500 1.500-2.500 3-2.500h7c3 0 3.500 2 3 5l-3 10c-.6 2-2 3-4 3Z" fill="url(#copB)" />
          </Svg>
        </TaskbarApp>
        <TaskbarApp dot="blue" className="border border-[#38453f] bg-[#24352f] pt-[8px]">
          <Svg>
            <circle cx="16" cy="16" r="15" fill="#fcc934" />
            <path d="M3 8.500A15 15 0 0 0 16 31l6.300-11.500H9.800z" fill="#34a853" />
            <path d="M3 8.500 9.800 19.500 16 9h13A15 15 0 0 0 3 8.500Z" fill="#ea4335" />
            <circle cx="16" cy="16" r="7.200" fill="white" />
            <circle cx="16" cy="16" r="5.700" fill="#2f7de9" />
          </Svg>
        </TaskbarApp>
        <TaskbarApp>
          <Svg>
            <g fill="#7d858e">
              <circle cx="16" cy="16" r="11.500" />
              <rect x="12" y="1.500" width="8" height="29" rx="2" transform="rotate(30 16 16)" />
              <rect x="12" y="1.500" width="8" height="29" rx="2" transform="rotate(90 16 16)" />
              <rect x="12" y="1.500" width="8" height="29" rx="2" transform="rotate(150 16 16)" />
            </g>
            <circle cx="16" cy="16" r="7" fill="white" />
            <circle cx="16" cy="16" r="5.300" fill="#0c5aa6" />
          </Svg>
        </TaskbarApp>
        <TaskbarApp>
          <OfficeIcon letter="W" dark="#1d55b5" shades={["#41a5ee", "#2b7cd3", "#185abd", "#103f91"]} />
        </TaskbarApp>
        <TaskbarApp>
          <OfficeIcon letter="X" dark="#107c41" shades={["#33c481", "#21a366", "#138b4c", "#185c37"]} />
        </TaskbarApp>
        <TaskbarApp>
          <div className="relative">
            <Svg>
              <path d="M10 8V3.500h12V8" fill="none" stroke="#35bdf0" strokeWidth="1.800" />
              <path d="M1.500 7h29v19a5 5 0 0 1-5 5h-19a5 5 0 0 1-5-5z" fill="#eeeeee" />
              <path d="M10.500 13.500h5v5h-5z" fill="#f25022" />
              <path d="M16.500 13.500h5v5h-5z" fill="#7fba00" />
              <path d="M10.500 19.500h5v5h-5z" fill="#00a4ef" />
              <path d="M16.500 19.500h5v5h-5z" fill="#ffb900" />
            </Svg>
            <span className="absolute -top-[5px] left-[17px] flex size-5 items-center justify-center rounded-full bg-[#4cc2ff] text-[14px] text-black">1</span>
          </div>
        </TaskbarApp>
        <TaskbarApp className="ml-[2px]">
          <Svg>
            <g fill="none" strokeWidth="8.500">
              <path d="M27 15.500A9.800 9.800 0 0 1 13 26" stroke="#f6c31a" transform="translate(-1.500 0)" />
              <path d="M15.500 25.800A9.800 9.800 0 0 1 6.300 14" stroke="#ea2f23" />
              <path d="M6.500 15.500A9.800 9.800 0 0 1 17 6.300" stroke="#2b7de9" />
              <path d="M16 6.200A9.800 9.800 0 0 1 25.800 17.500" stroke="#12b324" />
            </g>
          </Svg>
        </TaskbarApp>
        <TaskbarApp>
          <Svg>
            <defs>
              <linearGradient id="photoBg" x1="0" y1="1" x2="1" y2="0">
                <stop offset="0" stopColor="#0c63c4" />
                <stop offset="0.500" stopColor="#3a5fc0" />
                <stop offset="1" stopColor="#8259c8" />
              </linearGradient>
              <linearGradient id="photoHill" x1="0" y1="1" x2="1" y2="0.300">
                <stop offset="0" stopColor="#4ccdf5" />
                <stop offset="1" stopColor="#1b87dd" />
              </linearGradient>
            </defs>
            <rect x="3" y="3" width="26" height="26" rx="3" fill="url(#photoBg)" />
            <path d="m3 25 11-11.500c1.500-1.500 3-1.500 4.500 0L29 24v2a3 3 0 0 1-3 3H6a3 3 0 0 1-3-3z" fill="url(#photoHill)" />
            <circle cx="23" cy="8" r="2.600" fill="#dfe9fb" />
          </Svg>
        </TaskbarApp>
      </div>
      <div className="ml-auto flex items-center pr-[22px]">
        <Chevron size={14} sw={1.3} className="rotate-180" />
        <svg width="22" height="14" viewBox="0 0 22 14" className="ml-[23px]">
          <path d="M5.500 13.500a4.700 4.700 0 0 1-.7-9.300 6.500 6.500 0 0 1 11.500 1 4.300 4.300 0 0 1 .7 8.300z" fill="#e6e6e6" />
        </svg>
        <Icon size={18} box={18} sw={1.6} className="ml-[20px]">
          <path d="M1.500 7.500a10.600 10.600 0 0 1 15 0M4 10.400a7 7 0 0 1 10 0M6.500 13a3.600 3.600 0 0 1 5 0" />
          <circle cx="9" cy="15" r="0.900" fill="currentColor" />
        </Icon>
        <Icon size={20} box={20} sw={1.4} className="ml-[11px]">
          <path d="M1 7.500h3.500L9 3.500v13l-4.500-4H1zM11.500 7.500a4 4 0 0 1 0 5M14 5.300a7 7 0 0 1 0 9.400M16.500 3.300a10.300 10.300 0 0 1 0 13.400" />
        </Icon>
        <Icon size={22} box={22} sw={1.5} className="ml-[9px]">
          <rect x="1.500" y="5.500" width="16.500" height="11" rx="2.500" />
          <rect x="3.800" y="7.800" width="9" height="6.400" rx="0.800" fill="currentColor" stroke="none" />
          <path d="M20.500 9.500v3" />
        </Icon>
        <div className="ml-[19px] text-right leading-5 tracking-[0.018em]">
          <div>11:36</div>
          <div>24/06/2025</div>
        </div>
      </div>
    </footer>
  );
}

export default function App() {
  return (
    <div className="flex h-[1027px] w-[1912px] flex-col overflow-hidden font-['Open_Sans','Noto_Sans',sans-serif]">
      <BrowserBar />
      <TopBar />
      <div className="flex min-h-0 flex-1">
        <Sidebar />
        <Board />
        <TaskDetail />
      </div>
      <Taskbar />
    </div>
  );
}
